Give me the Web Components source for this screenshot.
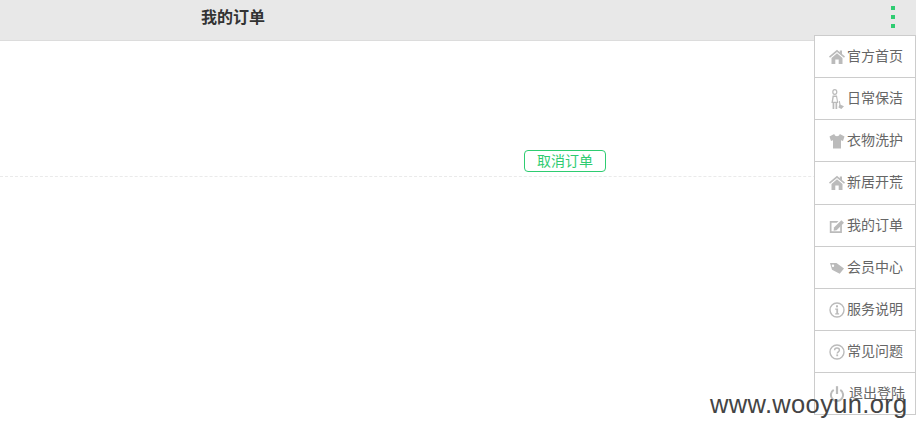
<!DOCTYPE html>
<html lang="zh">
<head>
<meta charset="utf-8">
<title>我的订单</title>
<style>
	html, body { margin: 0; height: 100%; background: #fff; overflow: hidden; }
	body { font-family: "Liberation Sans", "Noto Sans CJK SC", sans-serif; }
</style>
</head>
<body>
<order-page>
	<app-header slot="header" heading="我的订单"></app-header>
	<order-row slot="content" action="取消订单"></order-row>
	<side-menu slot="menu">
		<menu-item label="官方首页" icon="home"></menu-item>
		<menu-item label="日常保洁" icon="clean"></menu-item>
		<menu-item label="衣物洗护" icon="shirt"></menu-item>
		<menu-item label="新居开荒" icon="home"></menu-item>
		<menu-item label="我的订单" icon="edit"></menu-item>
		<menu-item label="会员中心" icon="tag"></menu-item>
		<menu-item label="服务说明" icon="info"></menu-item>
		<menu-item label="常见问题" icon="help"></menu-item>
		<menu-item label="退出登陆" icon="power" gap="4"></menu-item>
	</side-menu>
	<span slot="mark">www.wooyun.org</span>
</order-page>

<script>
	const ICONS = {
		home: '<path d="M8 .8 0 7.600 1 8.800 8 2.900 15 8.800 16 7.600 13 5V1.500H10.800V3.200Z"/><path d="M8 4.200 2.500 8.900V15H6.300V10.500H9.700V15H13.500V8.900Z"/>',
		clean: '<path fill-rule="evenodd" d="M5.800 0a2.600 3 0 1 1 0 6a2.600 3 0 1 1 0-6ZM5.800 1.200a1.400 1.800 0 1 0 0 3.600a1.400 1.800 0 1 0 0-3.600Z"/><path fill-rule="evenodd" d="M3.600 6.500h4.400l1.300 7.500H8.200v6H6.500v-6H5.300v6H3.600v-6H2.400ZM4.800 8 4 12.800H8L7.100 8Z"/><path d="M9.800 12h1l.8 3.800 3.400 1.500-2.600 2.700-3-1.500.9-2.800Z"/>',
		shirt: '<path d="M5.200 1 .5 3.400 2 8 4 7.300V15.500H12V7.300L14 8 15.500 3.400 10.800 1C10.300 2.600 9.300 3.200 8 3.200S5.700 2.600 5.200 1Z"/>',
		edit: '<path d="M.8 3H9.500L7.800 4.700H2.500V13.300H11.200V8.300L12.900 6.600V15H.8Z"/><path d="M5 9.600 12.400 2.200 15 4.800 7.600 12.200 4.600 12.700Z"/>',
		tag: '<path fill-rule="evenodd" d="M1 3H7.500L15 8.500 10.700 13.800 3 9.800ZM4 4.600a1.200 1.200 0 1 0 0 2.400a1.200 1.200 0 1 0 0-2.400Z"/>',
		info: '<circle cx="8" cy="8" r="7" fill="none" stroke="currentColor" stroke-width="1.400"/><rect x="7" y="3.300" width="2" height="2"/><path d="M6.200 6.600H9.100V11.300H10.100V12.500H6.200V11.300H7.300V7.800H6.200Z"/>',
		help: '<circle cx="8" cy="8" r="7" fill="none" stroke="currentColor" stroke-width="1.400"/><path d="M5.600 6.300C5.600 5 6.700 4.100 8 4.100S10.400 5 10.400 6.200C10.400 7.700 8.200 7.900 8.200 9.500" fill="none" stroke="currentColor" stroke-width="1.500"/><rect x="7.300" y="10.400" width="1.800" height="1.800"/>',
		power: '<path d="M4.700 3.800A6.100 6.100 0 1 0 11.300 3.800" fill="none" stroke="currentColor" stroke-width="2"/><rect x="6.900" y=".2" width="2.200" height="7.800"/>'
	};

	class OrderPage extends HTMLElement {
		constructor() {
			super();
			this.attachShadow({ mode: 'open' });
			this.shadowRoot.innerHTML = `
				<style>
					:host { display: block; position: relative; width: 916px; height: 435px; overflow: hidden; }
					.menu { position: absolute; left: 814px; top: 35px; }
					.mark {
						position: absolute; left: 710px; top: 389px;
						font: 25.500px/30px "Liberation Sans", sans-serif; color: #444; letter-spacing: .35px;
					}
				</style>
				<slot name="header"></slot>
				<slot name="content"></slot>
				<div class="menu"><slot name="menu"></slot></div>
				<div class="mark"><slot name="mark"></slot></div>`;
		}
	}

	class AppHeader extends HTMLElement {
		constructor() {
			super();
			this.attachShadow({ mode: 'open' });
			this.shadowRoot.innerHTML = `
				<style>
					:host {
						display: flex; align-items: center; justify-content: space-between;
						box-sizing: border-box; height: 41px; padding: 0 21px 9px 201px;
						background: #e8e8e8; border-bottom: 1px solid #dcdcdc;
					}
					h1 { margin: 0; font: bold 16px/24px "Noto Sans CJK SC", sans-serif; color: #333; }
					.dots { display: grid; gap: 4.500px; margin-top: 3px; }
					.dots i { display: block; width: 4px; height: 4.500px; background: #2ecc71; }
				</style>
				<h1></h1>
				<div class="dots"><i></i><i></i><i></i></div>`;
			this.shadowRoot.querySelector('h1').textContent = this.getAttribute('heading');
		}
	}

	class OrderRow extends HTMLElement {
		constructor() {
			super();
			this.attachShadow({ mode: 'open' });
			this.shadowRoot.innerHTML = `
				<style>
					:host {
						display: block; box-sizing: border-box; height: 136px; padding: 109px 0 0 524px;
						border-bottom: 1px dashed #eaeaea;
					}
					button {
						display: block; box-sizing: border-box; width: 82px; height: 22px; padding: 0 0 2px;
						background: #fff; border: 1px solid #2ecc71; border-radius: 4px; color: #2ecc71;
						font: 14px/18px "Noto Sans CJK SC", sans-serif;
					}
				</style>
				<button type="button"></button>`;
			this.shadowRoot.querySelector('button').textContent = this.getAttribute('action');
		}
	}

	class SideMenu extends HTMLElement {
		constructor() {
			super();
			this.attachShadow({ mode: 'open' });
			this.shadowRoot.innerHTML = `
				<style>
					:host { display: block; box-sizing: border-box; width: 102px; background: #fff; border: 1px solid #ccc; border-bottom: 0; }
				</style>
				<slot></slot>`;
		}
	}

	class MenuItem extends HTMLElement {
		constructor() {
			super();
			this.attachShadow({ mode: 'open' });
			const name = this.getAttribute('icon');
			const tall = name === 'clean';
			this.shadowRoot.innerHTML = `
				<style>
					:host {
						display: flex; align-items: center; gap: ${this.getAttribute('gap') || 2}px;
						box-sizing: border-box; height: 42.125px; padding: 0 0 3.125px 14px;
						border-bottom: 1px solid #ccc; color: #666;
						font: 14px/20px "Noto Sans CJK SC", sans-serif; white-space: nowrap;
					}
					svg { flex: none; width: 16px; height: ${tall ? 20 : 16}px; fill: #bbb; color: #bbb; margin-top: 4px; }
				</style>
				<svg viewBox="0 0 16 ${tall ? 20 : 16}">${ICONS[name]}</svg>
				<span></span>`;
			this.shadowRoot.querySelector('span').textContent = this.getAttribute('label');
		}
	}

	customElements.define('order-page', OrderPage);
	customElements.define('app-header', AppHeader);
	customElements.define('order-row', OrderRow);
	customElements.define('side-menu', SideMenu);
	customElements.define('menu-item', MenuItem);
</script>
</body>
</html>
